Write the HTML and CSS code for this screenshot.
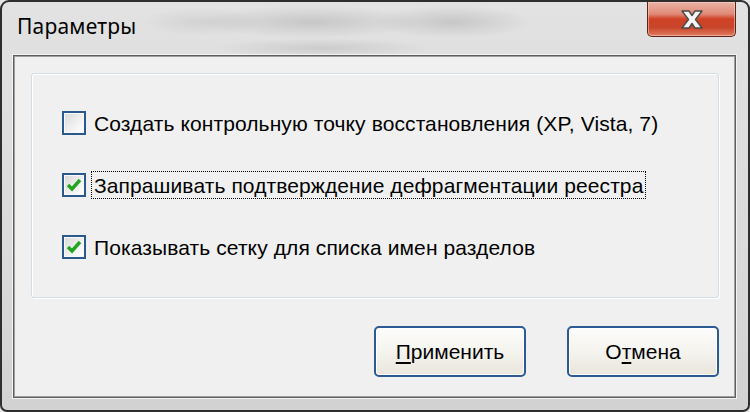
FILE: index.html
```html
<!DOCTYPE html>
<html lang="ru">
<head>
<meta charset="utf-8">
<title>Параметры</title>
<link rel="stylesheet" href="styles.css">
</head>
<body>
<div class="window">
  <div class="titlebar">
    <div class="title">Параметры</div>
    <div class="close">
      <svg width="26" height="21" viewBox="0 0 26 21">
        <path d="M3 2 H10 L13 6.5 L16 2 H23 L16.5 10.5 L23 19 H16 L13 14.5 L10 19 H3 L9.5 10.5 Z" fill="#f4f4f4" stroke="#4a4a4a" stroke-width="1.4" stroke-linejoin="round"/>
      </svg>
    </div>
  </div>
  <div class="client">
    <div class="group">
      <div class="row">
        <span class="box"></span>
        <span class="label">Создать контрольную точку восстановления (XP, Vista, 7)</span>
      </div>
      <div class="row">
        <span class="box checked">
          <svg width="16" height="14" viewBox="0 0 16 14"><path d="M2 7 L6 11 L14 2" fill="none" stroke="#22a622" stroke-width="3.4"/></svg>
        </span>
        <span class="label focus">Запрашивать подтверждение дефрагментации реестра</span>
      </div>
      <div class="row">
        <span class="box checked">
          <svg width="16" height="14" viewBox="0 0 16 14"><path d="M2 7 L6 11 L14 2" fill="none" stroke="#22a622" stroke-width="3.4"/></svg>
        </span>
        <span class="label">Показывать сетку для списка имен разделов</span>
      </div>
    </div>
    <div class="buttons">
      <button class="btn"><u>П</u>рименить</button>
      <button class="btn">О<u>т</u>мена</button>
    </div>
  </div>
</div>
</body>
</html>
```

FILE: styles.css
```css
html, body {
  margin: 0;
  padding: 0;
  background: #e6e6e6;
}

.window {
  width: 750px;
  height: 412px;
  box-sizing: border-box;
  border: 2px solid #2e2e2e;
  border-radius: 9px 9px 7px 7px;
  background:
    radial-gradient(ellipse 110px 16px at 310px 20px, rgba(130,130,130,0.28), transparent),
    radial-gradient(ellipse 80px 16px at 450px 20px, rgba(130,130,130,0.28), transparent),
    radial-gradient(ellipse 60px 14px at 200px 20px, rgba(140,140,140,0.18), transparent),
    radial-gradient(ellipse 110px 10px at 320px 46px, rgba(130,130,130,0.22), transparent),
    linear-gradient(#e2e2e2, #dadada 60%, #d2d2d2);
  display: flex;
  flex-direction: column;
  padding: 0 12px 12px 11px;
  font-family: "Liberation Sans", Arial, sans-serif;
}

.titlebar {
  height: 51px;
  display: flex;
  justify-content: space-between;
  align-items: flex-start;
  flex: none;
}

.title {
  font-family: "Noto Sans", "Open Sans", sans-serif;
  font-size: 21px;
  color: #000;
  padding: 11px 0 0 4px;
  line-height: 26px;
  letter-spacing: 0.2px;
}

.close {
  width: 89px;
  height: 35px;
  box-sizing: border-box;
  border: 1px solid #5b2418;
  border-top: none;
  border-radius: 0 0 5px 5px;
  background: linear-gradient(#eab2a6 0%, #e08b78 35%, #cf4226 50%, #c9452a 75%, #e07c62 100%);
  box-shadow: inset 0 0 0 1px rgba(255,220,210,0.5);
  display: flex;
  align-items: center;
  justify-content: center;
}

.client {
  flex: 1;
  border: 1px solid #5e5e5e;
  box-shadow: 0 0 0 1px #f4f4f4, inset 0 0 0 1px #a0a0a0;
  background: #f0f0f0;
  display: flex;
  flex-direction: column;
  padding: 17px 16px 20px 17px;
  margin-top: 2px;
}

.group {
  height: 225px;
  box-sizing: border-box;
  border: 1px solid #d3dde4;
  border-radius: 3px;
  box-shadow: inset 1px 1px 0 #ffffff, 1px 1px 0 #ffffff;
  display: flex;
  flex-direction: column;
  gap: 34px;
  padding: 35px 0 0 30px;
}

.row {
  display: flex;
  align-items: center;
  height: 28px;
}

.box {
  width: 24px;
  height: 24px;
  box-sizing: border-box;
  border: 2px solid #2a5a8c;
  background: linear-gradient(135deg, #d8d8d8, #f6f6f6 70%, #ffffff);
  box-shadow: inset 0 0 0 1px #f8f8f8;
  display: flex;
  align-items: center;
  justify-content: center;
  flex: none;
}

.label {
  font-size: 21px;
  letter-spacing: 0.1px;
  color: #000;
  margin-left: 5px;
  padding: 0 2px;
  height: 28px;
  line-height: 27px;
  box-sizing: border-box;
  border: 1px solid transparent;
}

.label.focus {
  border: 1px dotted #000;
}

.buttons {
  margin-top: auto;
  display: flex;
  justify-content: flex-end;
  gap: 41px;
}

.btn {
  width: 152px;
  height: 51px;
  box-sizing: border-box;
  border: 2px solid #2b5a94;
  border-radius: 5px;
  background: linear-gradient(#fdfdfc, #f4f3ee 50%, #e8e6dc);
  box-shadow: inset 0 0 0 1px #ffffff;
  font-family: "Liberation Sans", Arial, sans-serif;
  font-size: 21px;
  color: #000;
  padding: 0;
}

.btn u {
  text-decoration-thickness: 2px;
  text-underline-offset: 3px;
}
```
